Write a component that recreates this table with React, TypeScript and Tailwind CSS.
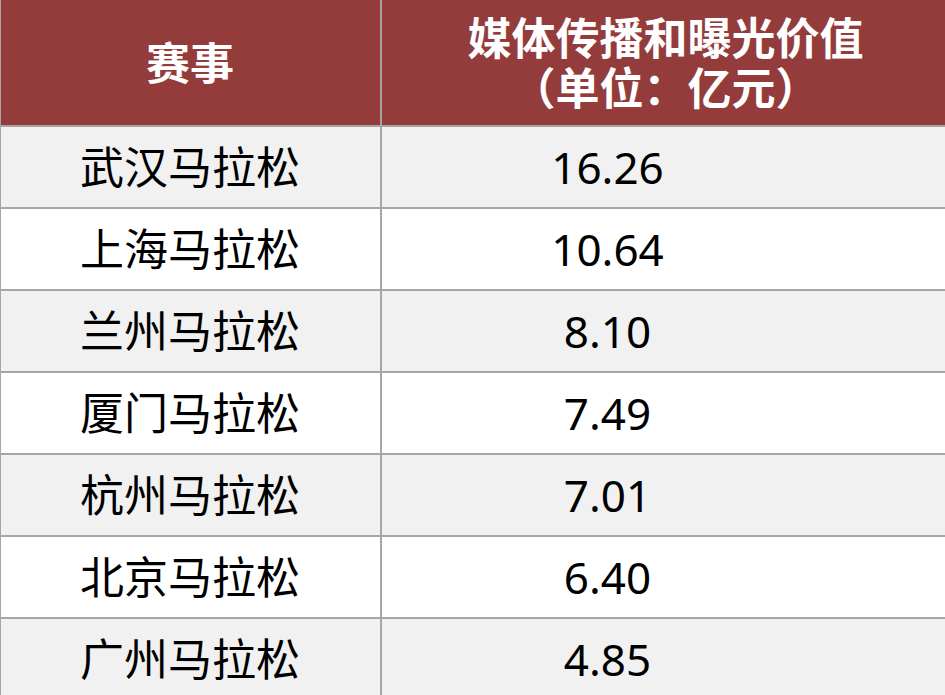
const rows = [
  { name: '武汉马拉松', value: '16.26' },
  { name: '上海马拉松', value: '10.64' },
  { name: '兰州马拉松', value: '8.10' },
  { name: '厦门马拉松', value: '7.49' },
  { name: '杭州马拉松', value: '7.01' },
  { name: '北京马拉松', value: '6.40' },
  { name: '广州马拉松', value: '4.85' },
]

const cjk = "font-['Noto_Sans','Noto_Sans_CJK_SC',sans-serif]"

export default function App() {
  return (
    <div className={`w-[945px] h-[695px] overflow-hidden bg-white ${cjk}`}>
      <div className="grid grid-cols-[381px_1fr] border-l border-[#a6a6a6]">
        {/* Header */}
        <div className="h-[127px] bg-[#943c3c] border-b-2 border-r-2 border-[#a6a6a6] flex items-center justify-center text-white font-bold text-[44px] leading-[50px] pr-[1px]">
          赛事
        </div>
        <div className="h-[127px] bg-[#943c3c] border-b-2 border-[#a6a6a6] flex flex-col items-center justify-center text-white font-bold text-[44px] leading-[50px] pl-[4px]">
          <span>媒体传播和曝光价值</span>
          <span>（单位：亿元）</span>
        </div>

        {/* Body */}
        {rows.map((row, i) => {
          const bg = i % 2 === 0 ? 'bg-[#f1f1f1]' : 'bg-white'
          return (
            <div key={row.name} className="contents">
              <div className={`h-[82px] ${bg} border-b-2 border-r-2 border-[#a6a6a6] flex items-center justify-center text-[44px] text-black pr-[1px]`}>
                {row.name}
              </div>
              <div className={`h-[82px] ${bg} border-b-2 border-[#a6a6a6] flex items-center justify-center text-[44px] text-black pr-[112px]`}>
                {row.value}
              </div>
            </div>
          )
        })}
      </div>
    </div>
  )
}
